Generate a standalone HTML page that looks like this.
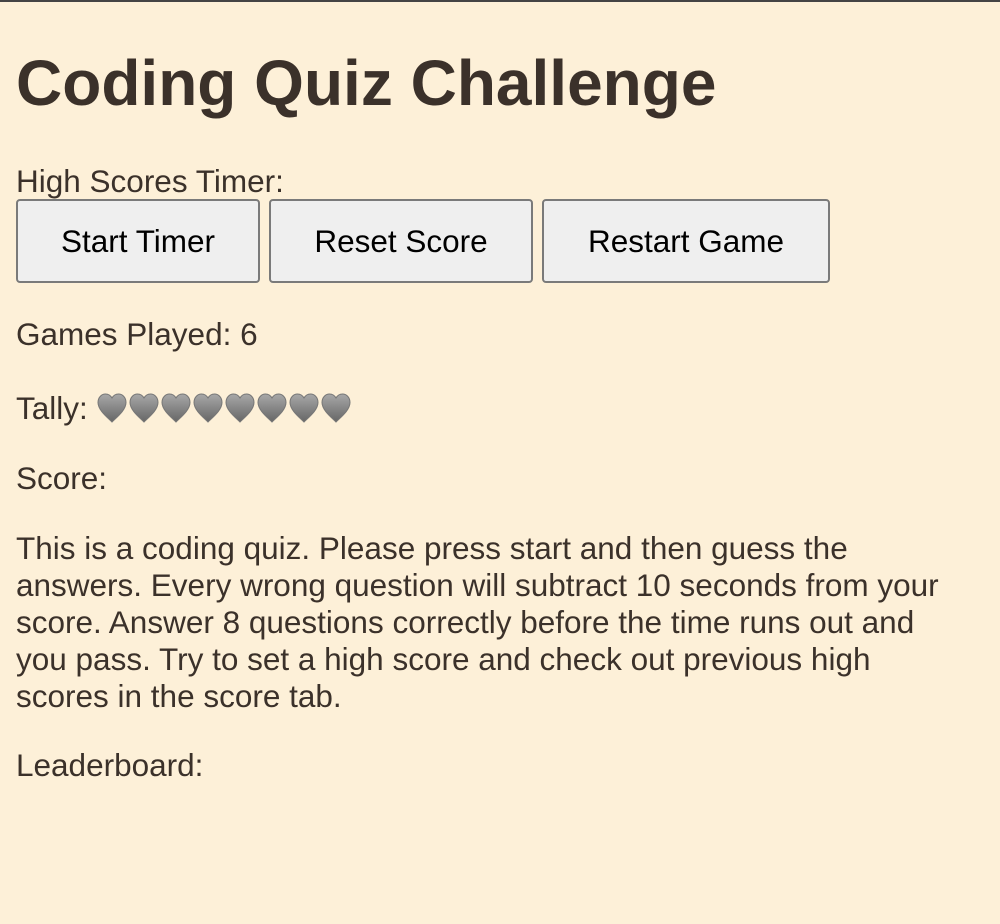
<!DOCTYPE html>
<html><head><meta charset="utf-8"><style>
html,body{margin:0;padding:0;}
body{width:1000px;height:924px;background:#fdf0d8;border-top:2px solid #444;box-sizing:border-box;font-family:"Liberation Sans",sans-serif;color:#3b312a;overflow:hidden;position:relative;}
.a{position:absolute;left:16px;font-size:31.5px;line-height:37px;white-space:nowrap;}
h1{position:absolute;left:16px;top:45px;margin:0;font-size:64px;line-height:72px;font-weight:bold;}
.btn{position:absolute;top:197px;height:84px;border:2px solid #7a7a7a;border-radius:4px;background:#efefef;color:#000;font-size:31.5px;display:flex;align-items:center;justify-content:center;box-sizing:border-box;}
</style></head><body>
<h1>Coding Quiz Challenge</h1>
<div class="a" style="top:161px">High Scores Timer:</div>
<div class="btn" style="left:16px;width:244px">Start Timer</div>
<div class="btn" style="left:269px;width:264px">Reset Score</div>
<div class="btn" style="left:542px;width:288px">Restart Game</div>
<div class="a" style="top:314px">Games Played: 6</div>
<div class="a" style="top:388px">Tally: <svg width="0" height="0" style="position:absolute"><defs><linearGradient id="g" x1="0" y1="0" x2="0" y2="1"><stop offset="0" stop-color="#a8a8a8"/><stop offset="1" stop-color="#666"/></linearGradient></defs></svg><span style="display:inline-block;width:258px;height:30px;vertical-align:-6px"><svg width="258" height="32" viewBox="0 0 258 32"><g fill="url(#g)" stroke="#777" stroke-width="1"><path id="hp" d="M15 29 C10 24 1 17 1 9.5 C1 4.5 4.5 1 8.5 1 C11.5 1 13.8 2.8 15 5 C16.2 2.8 18.5 1 21.5 1 C25.5 1 29 4.5 29 9.5 C29 17 20 24 15 29Z"/><use href="#hp" x="32"/><use href="#hp" x="64"/><use href="#hp" x="96"/><use href="#hp" x="128"/><use href="#hp" x="160"/><use href="#hp" x="192"/><use href="#hp" x="224"/></g></svg></span></div>
<div class="a" style="top:458px">Score:</div>
<div class="a" style="top:528px;white-space:normal;width:955px">This is a coding quiz. Please press start and then guess the answers. Every wrong question will subtract 10 seconds from your score. Answer 8 questions correctly before the time runs out and you pass. Try to set a high score and check out previous high scores in the score tab.</div>
<div class="a" style="top:745px">Leaderboard:</div>
</body></html>
